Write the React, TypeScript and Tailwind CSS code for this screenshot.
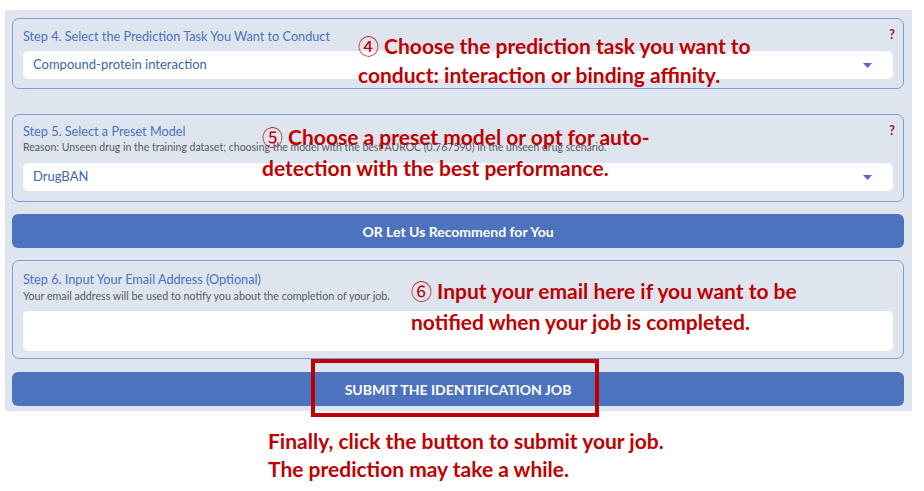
import React from 'react'

const ui = { fontFamily: 'Lato, "Noto Sans", sans-serif' }
const note = { fontFamily: 'Lato, "Open Sans", sans-serif' }
const circled = { fontFamily: '"Noto Sans CJK JP", sans-serif', fontWeight: 400 }

function Caret() {
  return (
    <svg width="9" height="5" viewBox="0 0 9 5" className="shrink-0">
      <path d="M0 0 H9 L4.5 5 Z" fill="#4a72c0" />
    </svg>
  )
}

function Select({ value }: { value: string }) {
  return (
    <div className="h-[28px] bg-white rounded-[5px] flex items-center justify-between pl-[10px] pr-[21px]">
      <span className="text-[13px] text-[#3f63ad]">{value}</span>
      <Caret />
    </div>
  )
}

function Help() {
  return <span className="absolute right-[8px] top-[6px] text-[13px] font-bold text-[#8a1f1f]">?</span>
}

export default function App() {
  return (
    <div className="relative w-[924px] h-[491px] bg-white overflow-hidden" style={ui}>
      {/* form area */}
      <div className="absolute left-[5px] top-[10px] w-[907px] h-[401px] bg-[#dfe5ef] pl-[7px] pr-[8px] pt-[8px] flex flex-col">
        <div className="relative h-[71px] border border-[#7d9bd6] rounded-[7px] px-[10px] pt-[8px] flex flex-col">
          <Help />
          <div className="text-[12.7px] leading-[18px] text-[#4a72c0] mb-[6px]">
            Step 4. Select the Prediction Task You Want to Conduct
          </div>
          <Select value="Compound-protein interaction" />
        </div>

        <div className="relative h-[88px] mt-[25px] border border-[#7d9bd6] rounded-[7px] px-[10px] pt-[7px] flex flex-col">
          <Help />
          <div className="text-[12.7px] leading-[18px] text-[#4a72c0]">Step 5. Select a Preset Model</div>
          <div className="text-[10.5px] leading-[14px] text-[#555b66] mb-[9px]">
            Reason: Unseen drug in the training dataset; choosing the model with the best AUROC (0.767590) in the unseen drug scenario.
          </div>
          <Select value="DrugBAN" />
        </div>

        <button className="mt-[12px] h-[34px] rounded-[6px] bg-[#4d73bf] text-white text-[14px] font-bold">
          OR Let Us Recommend for You
        </button>

        <div className="relative h-[99px] mt-[12px] border border-[#7d9bd6] rounded-[7px] px-[10px] pt-[9px] flex flex-col">
          <div className="text-[12.7px] leading-[18px] text-[#4a72c0]">Step 6. Input Your Email Address (Optional)</div>
          <div className="text-[10.7px] leading-[15px] text-[#555b66] mb-[8px]">
            Your email address will be used to notify you about the completion of your job.
          </div>
          <div className="h-[40px] bg-white rounded-[5px]" />
        </div>

        <button className="mt-[13px] h-[34px] rounded-[6px] bg-[#4d73bf] text-white text-[14px] font-bold">
          SUBMIT THE IDENTIFICATION JOB
        </button>
      </div>

      {/* annotations */}
      <div className="absolute left-[358px] top-[31px] text-[21px] leading-[29px] font-bold text-[#c00000]" style={note}>
        <div><span style={circled}>④</span> Choose the prediction task you want to</div>
        <div>conduct: interaction or binding affinity.</div>
      </div>
      <div className="absolute left-[262px] top-[121px] text-[21px] leading-[31px] font-bold text-[#c00000]" style={note}>
        <div><span style={circled}>⑤</span> Choose a preset model or opt for auto-</div>
        <div>detection with the best performance.</div>
      </div>
      <div className="absolute left-[411px] top-[275px] text-[21px] leading-[31px] font-bold text-[#c00000]" style={note}>
        <div><span style={circled}>⑥</span> Input your email here if you want to be</div>
        <div>notified when your job is completed.</div>
      </div>
      <div className="absolute left-[311px] top-[359px] w-[288px] h-[58px] border-4 border-[#c00000]" />
      <div className="absolute left-[268px] top-[427px] text-[21px] leading-[28px] font-bold text-[#c00000]" style={note}>
        <div>Finally, click the button to submit your job.</div>
        <div>The prediction may take a while.</div>
      </div>
    </div>
  )
}
